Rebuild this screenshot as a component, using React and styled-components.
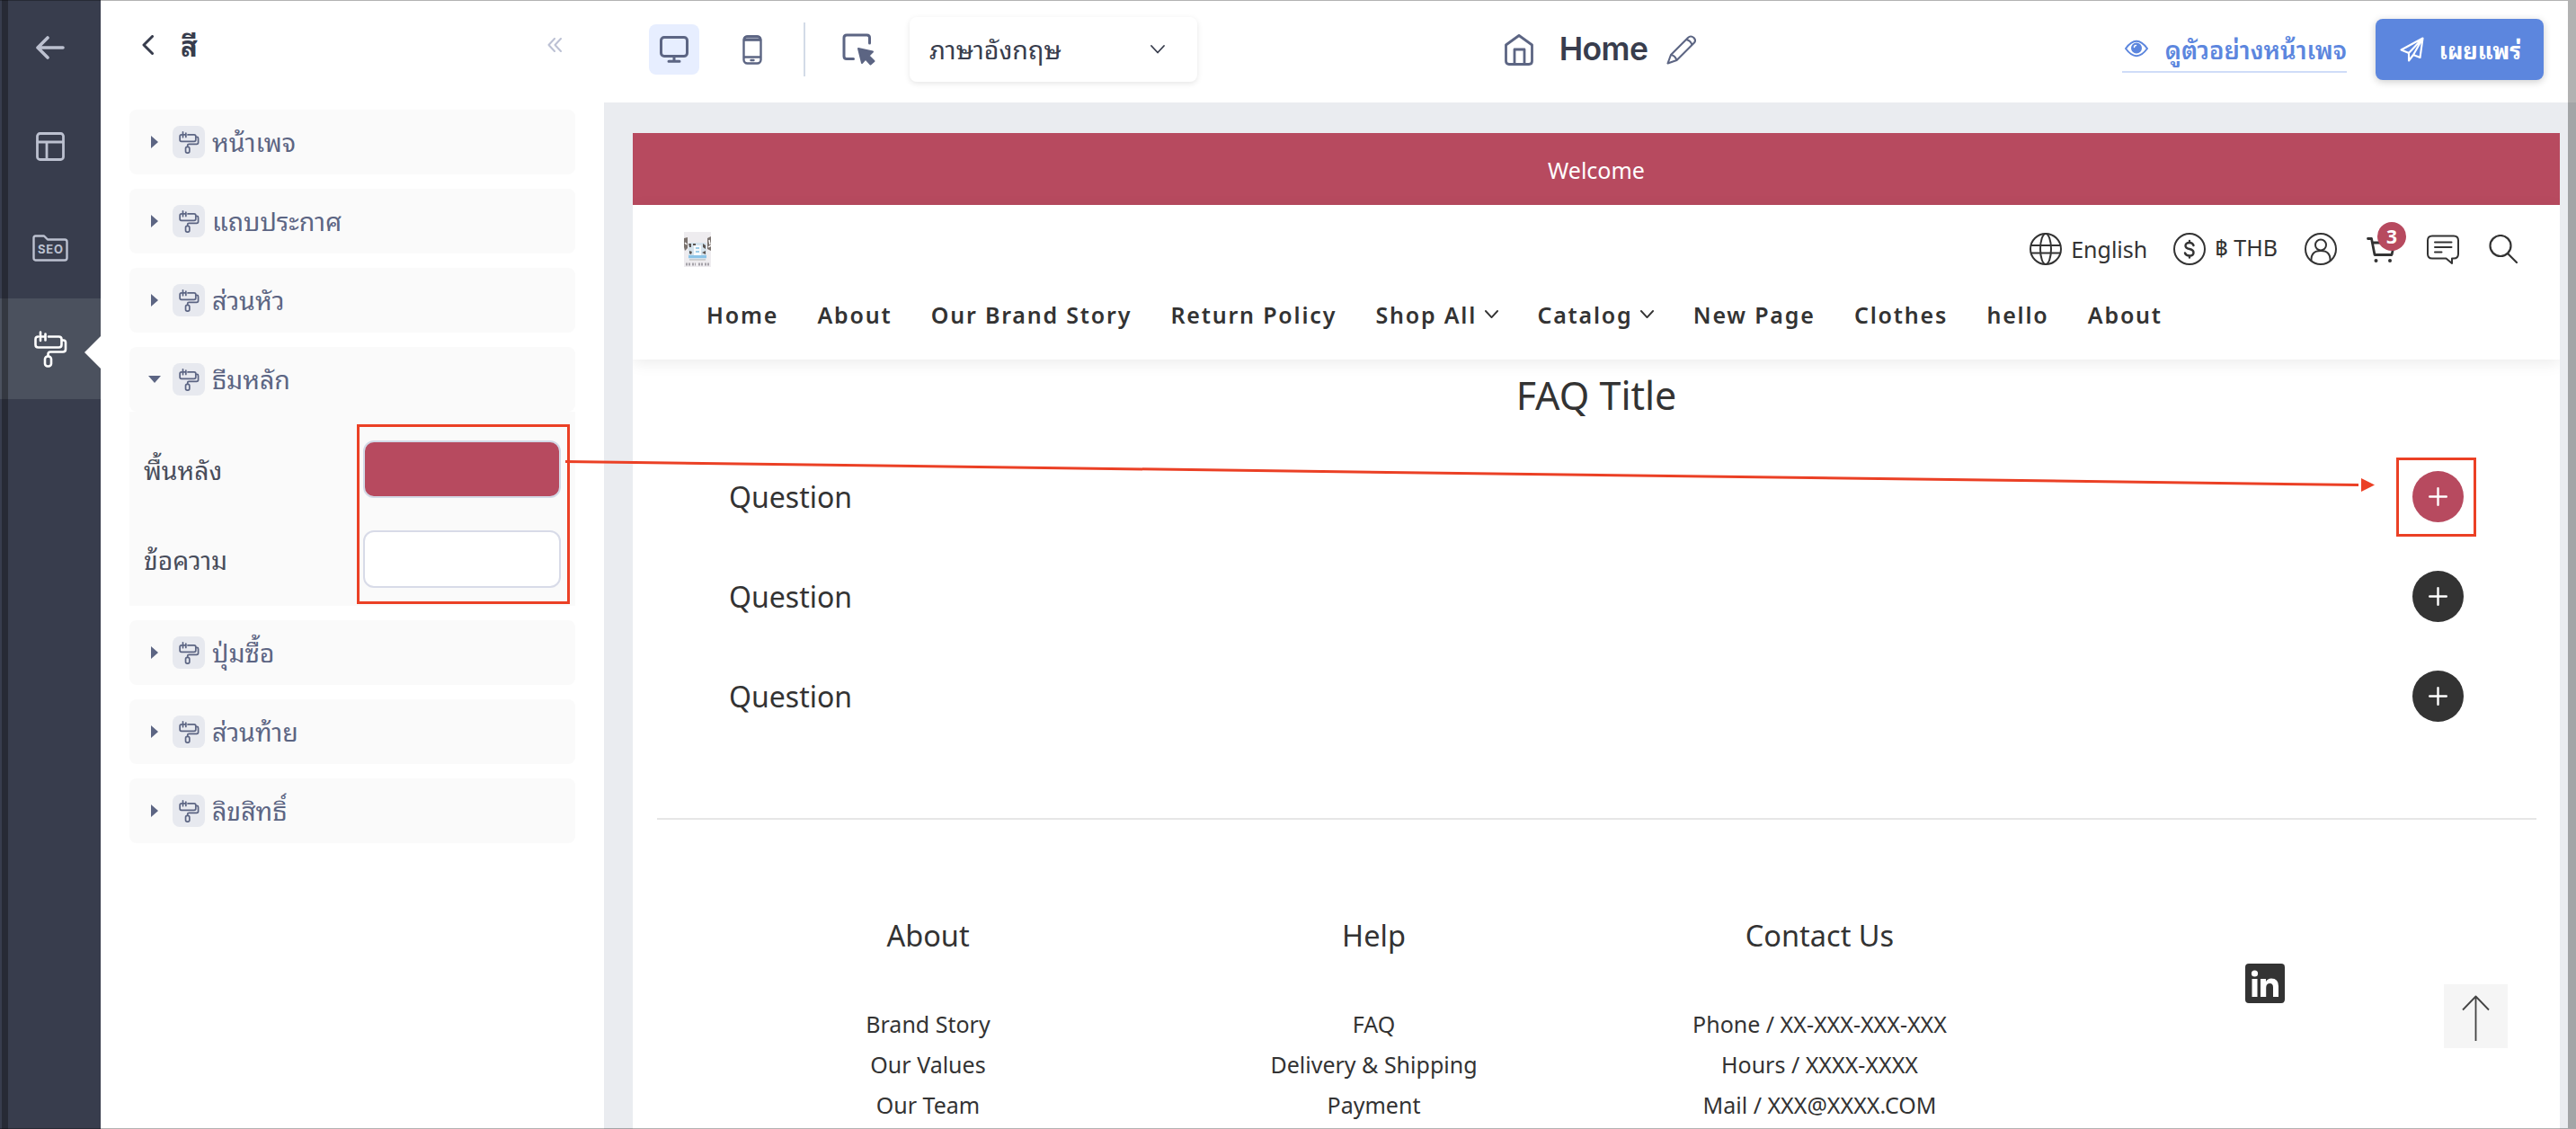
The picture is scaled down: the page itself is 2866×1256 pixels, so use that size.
import React from 'react';
import styled, { createGlobalStyle, css } from 'styled-components';

const latin = '"Noto Sans", "Noto Sans Thai", sans-serif';
const thai = '"Noto Sans Thai Looped", Loma, Garuda, "Noto Sans Thai", "Noto Sans", sans-serif';
const accent = '#b74a5f';
const slate = '#5c6583';
const red = '#eb4025';

const GlobalStyle = createGlobalStyle`
  *, *::before, *::after { box-sizing: border-box; }
  body { margin: 0; background: #fff; overflow: hidden; }
  h1, h2, h3, p, ul { margin: 0; padding: 0; font-weight: 400; }
  svg { display: block; flex: none; }
`;

const Window = styled.div`
  position: relative;
  display: flex;
  width: 2866px;
  height: 1256px;
  overflow: hidden;
  background: #fff;
  font-family: ${latin};
  color: #333;
`;

/* ---------- sidebar ---------- */
const Sidebar = styled.nav`
  position: relative;
  flex: none;
  width: 112px;
  background: #383d4d;
  &::before {
    content: '';
    position: absolute;
    z-index: 1;
    left: 2px;
    top: 0;
    bottom: 0;
    width: 7px;
    background: rgba(0, 0, 0, 0.3);
  }
`;
const SideItem = styled.div`
  position: relative;
  display: flex;
  align-items: center;
  justify-content: center;
  height: ${(p) => p.$h || 112}px;
  color: ${(p) => (p.$active ? '#fff' : '#bcc1d0')};
  background: ${(p) => (p.$active ? '#4b515e' : 'transparent')};
  ${(p) =>
    p.$active &&
    css`
      &::after {
        content: '';
        position: absolute;
        right: 0;
        top: 42px;
        border: solid transparent;
        border-width: 18px 18px 18px 0;
        border-right-color: #fff;
      }
    `}
`;

/* ---------- colour panel ---------- */
const Panel = styled.aside`
  flex: none;
  width: 560px;
  padding: 0 32px;
`;
const PanelHead = styled.header`
  display: flex;
  align-items: center;
  height: 100px;
  margin-bottom: 22px;
  padding: 0 15px 0 14px;
  color: #383d4d;
`;
const PanelTitle = styled.h2`
  flex: 1;
  margin-left: 30px;
  padding-bottom: 3px;
  font: 700 31px/44px ${thai};
`;
const Card = styled.section`
  margin-bottom: 16px;
`;
const CardHead = styled.div`
  display: flex;
  align-items: center;
  height: 72px;
  padding-left: 20px;
  border-radius: 8px;
  background: #fafafa;
  color: ${slate};
  font: 400 28.5px/40px ${thai};
`;
const CardLabel = styled.span`
  padding-bottom: 4px;
`;
const Caret = styled.i`
  flex: none;
  width: 16px;
  margin-right: 12px;
  &::before {
    content: '';
    display: block;
    width: 0;
    margin: 0 auto;
    border: solid transparent;
    ${(p) =>
      p.$open
        ? css`
            border-width: 8px 7px 0;
            border-top-color: ${slate};
          `
        : css`
            border-width: 7px 0 7px 8px;
            border-left-color: ${slate};
          `}
  }
`;
const Chip = styled.span`
  display: flex;
  align-items: center;
  justify-content: center;
  width: 36px;
  height: 36px;
  margin-right: 8px;
  border-radius: 8px;
  background: #e7e9ef;
`;
const CardBody = styled.div`
  display: flex;
  flex-direction: column;
  gap: 36px;
  height: 216px;
  padding: 32px 16px 0;
  background: #fafafa;
`;
const Field = styled.label`
  display: flex;
  align-items: center;
  justify-content: space-between;
  height: 64px;
  color: #484d5b;
  font: 400 28.3px/40px ${thai};
`;
const Swatch = styled.span`
  width: 220px;
  height: 64px;
  border: 2px solid ${(p) => (p.$color === '#fff' ? '#d8dbe8' : '#d3d9e6')};
  border-radius: 12px;
  background: ${(p) => p.$color};
`;

/* ---------- editor ---------- */
const Editor = styled.main`
  flex: 1;
  display: flex;
  flex-direction: column;
`;
const Toolbar = styled.header`
  display: flex;
  align-items: center;
  justify-content: space-between;
  height: 114px;
  padding: 4px 36px 8px 50px;
  color: ${slate};
`;
const Tools = styled.div`
  display: flex;
  align-items: center;
  width: 900px;
`;
const Tool = styled.span`
  display: flex;
  align-items: center;
  justify-content: center;
  width: 56px;
  height: 56px;
  margin-right: ${(p) => p.$gap || 0}px;
  border-radius: 8px;
  background: ${(p) => (p.$active ? '#e7eeff' : 'transparent')};
`;
const Divider = styled.i`
  width: 2px;
  height: 60px;
  margin-right: 31px;
  background: #d3dbe7;
`;
const LanguageSelect = styled.div`
  display: flex;
  align-items: center;
  justify-content: space-between;
  width: 320px;
  height: 72px;
  padding: 0 36px 0 22px;
  border-radius: 8px;
  box-shadow: 0 2px 6px rgba(0, 0, 0, 0.1);
  color: #383d4d;
  font: 400 28.6px/40px ${thai};
  span { padding-bottom: 5px; }
`;
const PageName = styled.div`
  display: flex;
  align-items: center;
  h1 {
    margin: 0 21px 0 29px;
    color: #383d4d;
    font: 600 35.5px/44px Inter, sans-serif;
    letter-spacing: -0.6px;
  }
`;
const Actions = styled.div`
  display: flex;
  align-items: center;
  justify-content: flex-end;
  width: 891px;
`;
const PreviewLink = styled.a`
  display: flex;
  align-items: center;
  justify-content: space-between;
  width: 250px;
  height: 52px;
  margin: 0 32px 0 0;
  padding-left: 3px;
  border-bottom: 2px solid #cfdcf8;
  color: #5c86de;
  font: 600 27.4px/44px ${thai};
  white-space: nowrap;
`;
const PublishButton = styled.button`
  display: flex;
  align-items: center;
  justify-content: space-between;
  width: 187px;
  height: 68px;
  padding: 0 25px 1px 27px;
  border: 0;
  border-radius: 8px;
  background: #5c86de;
  box-shadow: 0 2px 8px rgba(0, 0, 0, 0.2);
  color: #fff;
  font: 700 25.4px/44px ${thai};
  white-space: nowrap;
`;

/* ---------- store preview ---------- */
const Stage = styled.div`
  flex: 1;
  min-height: 0;
  padding: 34px 18px 0 32px;
  background: #eaecf0;
`;
const Store = styled.div`
  position: relative;
  height: 1108px;
  overflow: hidden;
  background: #fff;
`;
const Announcement = styled.div`
  height: 80px;
  background: ${accent};
  color: #fff;
  text-align: center;
  font-size: 25px;
  line-height: 82px;
`;
const StoreHeader = styled.header`
  height: 172px;
  box-shadow: 0 4px 16px rgba(0, 0, 0, 0.08);
`;
const StoreTop = styled.div`
  display: flex;
  align-items: center;
  justify-content: space-between;
  height: 98px;
  padding: 0 47px 0 57px;
`;
const Utilities = styled.div`
  display: flex;
  align-items: center;
  font-size: 25px;
`;
const Utility = styled.span`
  position: relative;
  display: flex;
  align-items: center;
  gap: 10px;
  margin-left: ${(p) => p.$ml}px;
  white-space: nowrap;
`;
const Badge = styled.b`
  position: absolute;
  left: 12px;
  top: -16px;
  width: 32px;
  height: 32px;
  border-radius: 50%;
  background: ${accent};
  color: #fff;
  text-align: center;
  font: 700 21px/33px ${latin};
`;
const StoreNav = styled.nav`
  display: flex;
  align-items: center;
  gap: 43.3px;
  padding: 4px 0 0 82px;
  font-size: 25px;
  font-weight: 600;
  line-height: 40px;
  letter-spacing: 1.8px;
  white-space: nowrap;
  span { display: flex; align-items: center; gap: 9px; }
`;
const FaqTitle = styled.h2`
  margin-top: 8px;
  text-align: center;
  font-size: 43px;
  line-height: 64px;
`;
const FaqList = styled.div`
  padding: 25px 107px 0 107px;
  height: 438px;
`;
const FaqRow = styled.div`
  display: flex;
  align-items: center;
  justify-content: space-between;
  height: 111px;
  font-size: 32px;
`;
const Plus = styled.span`
  display: flex;
  align-items: center;
  justify-content: center;
  width: 57px;
  height: 57px;
  border-radius: 50%;
  background: ${(p) => (p.$active ? accent : '#333')};
`;
const Footer = styled.footer`
  display: grid;
  grid-template-columns: repeat(4, 496px);
  justify-content: center;
  margin: 0 26px 0 27px;
  padding-top: 104px;
  border-top: 2px solid #e6e6e6;
`;
const Column = styled.div`
  text-align: center;
  h3 { font-size: 32.5px; line-height: 50px; margin-bottom: 51px; }
  p { font-size: 25px; line-height: 45px; }
  svg { margin: 56px auto 0 225px; }
`;
const TopButton = styled.div`
  position: absolute;
  right: 58px;
  bottom: 90px;
  display: flex;
  align-items: center;
  justify-content: center;
  width: 71px;
  height: 71px;
  padding-top: 4px;
  background: #f5f5f5;
`;

/* ---------- overlays ---------- */
const Highlight = styled.div`
  position: absolute;
  left: ${(p) => p.$x}px;
  top: ${(p) => p.$y}px;
  width: ${(p) => p.$w}px;
  height: ${(p) => p.$h}px;
  border: 3px solid ${red};
`;
const Pointer = styled.svg`
  position: absolute;
  left: 620px;
  top: 500px;
`;
const Edge = styled.div`
  position: absolute;
  inset: 0;
  border: solid rgba(0, 0, 0, 0.3);
  border-width: 1px 9px 1px 0;
`;

/* ---------- icons ---------- */
const Line = ({ w, h, box, sw = 2, children, ...rest }) => (
  <svg width={w} height={h} viewBox={box || `0 0 ${w} ${h}`} fill="none" stroke="currentColor" strokeWidth={sw} strokeLinecap="round" strokeLinejoin="round" {...rest}>
    {children}
  </svg>
);
const Roller = ({ w = 37, h = 41, sw = 2.6 }) => (
  <Line w={w} h={h} box="0 0 37 41" sw={sw}>
    <path d="M4.5 6.5 Q1.5 6.5 1.5 9.5 V15.5 Q1.5 18.5 4.5 18.5 H27.5 Q30.5 18.5 30.5 15.5 V9.5 Q30.5 6.5 27.5 6.5 H16 M7 1.5 V11 M12.5 3.5 V10.5 M7 6.5 H12.5" />
    <path d="M31 10.5 H32.5 Q35 10.5 35 13 V20.5 Q35 23.5 32 23.5 H18 Q15.5 23.5 15.5 26 V28" />
    <rect x="12" y="28.5" width="7" height="11" rx="3" />
  </Line>
);
const Down = ({ w, h, sw }) => (
  <Line w={w} h={h} box="0 0 16 10" sw={sw}><path d="M1 1 L8 8.5 L15 1" /></Line>
);

const sections = ['หน้าเพจ', 'แถบประกาศ', 'ส่วนหัว', 'ธีมหลัก', 'ปุ่มซื้อ', 'ส่วนท้าย', 'ลิขสิทธิ์'];
const fields = [['พื้นหลัง', accent], ['ข้อความ', '#fff']];
const links = ['Home', 'About', 'Our Brand Story', 'Return Policy', 'Shop All', 'Catalog', 'New Page', 'Clothes', 'hello', 'About'];
const columns = [
  ['About', 'Brand Story', 'Our Values', 'Our Team'],
  ['Help', 'FAQ', 'Delivery & Shipping', 'Payment'],
  ['Contact Us', 'Phone / XX-XXX-XXX-XXX', 'Hours / XXXX-XXXX', 'Mail / XXX@XXXX.COM'],
];

export default function App() {
  return (
    <Window>
      <GlobalStyle />
      <Sidebar>
        <SideItem $h={106}>
          <Line w={32} h={26} sw={3.6}><path d="M30 13 H3 M13 2 L2 13 L13 24" /></Line>
        </SideItem>
        <SideItem $h={114}>
          <Line w={32} h={32} sw={2.8}>
            <rect x="1.5" y="1.5" width="29" height="29" rx="3" />
            <path d="M2 11 H30 M12 11 V30" />
          </Line>
        </SideItem>
        <SideItem>
          <Line w={40} h={30} sw={2.4}>
            <path d="M3.5 1.5 H13 L17 5.5 H36 Q38.5 5.5 38.5 8 V26 Q38.5 28.5 36 28.5 H3.5 Q1.5 28.5 1.5 26 V3.5 Q1.5 1.5 3.5 1.5 Z" />
            <text x="20.3" y="21" textAnchor="middle" fontFamily="Inter, sans-serif" fontWeight="700" fontSize="13" letterSpacing="0.8" fill="currentColor" stroke="none">SEO</text>
          </Line>
        </SideItem>
        <SideItem $active><Roller /></SideItem>
      </Sidebar>

      <Panel>
        <PanelHead>
          <Line w={13} h={22} sw={3}><path d="M11.5 1.5 L2 11 L11.5 20.5" /></Line>
          <PanelTitle>สี</PanelTitle>
          <Line w={16} h={16} sw={2} color="#bcc1d4"><path d="M8 1 L1.5 8 L8 15 M15 1 L8.5 8 L15 15" /></Line>
        </PanelHead>
        {sections.map((name, i) => (
          <Card key={name}>
            <CardHead>
              <Caret $open={i === 3} />
              <Chip><Roller w={23} h={25} sw={2.8} /></Chip>
              <CardLabel>{name}</CardLabel>
            </CardHead>
            {i === 3 && (
              <CardBody>
                {fields.map(([label, color]) => (
                  <Field key={label}>{label}<Swatch $color={color} /></Field>
                ))}
              </CardBody>
            )}
          </Card>
        ))}
      </Panel>

      <Editor>
        <Toolbar>
          <Tools>
            <Tool $active $gap={31}>
              <Line w={32} h={30} sw={3}>
                <rect x="1.5" y="1.5" width="29" height="21" rx="3.5" />
                <path d="M16 23 V28 M10 28.2 H22" />
              </Line>
            </Tool>
            <Tool $gap={29}>
              <Line w={22} h={33} sw={2.4}>
                <path d="M2 5 Q2 1.500 6 1.500 H16 Q20 1.500 20 5 Z" fill="#b5bac8" />
                <rect x="1.5" y="1.5" width="19" height="30" rx="4" />
                <path d="M2 5.5 H20 M2 24.5 H20 M9.5 28 H12.5" />
              </Line>
            </Tool>
            <Divider />
            <Tool $gap={29}>
              <Line w={37} h={36} sw={3}>
                <path d="M30.5 11 V5 Q30.5 2 27.500 2 H5 Q2 2 2 5 V25.500 Q2 28.500 5 28.500 H12.500" />
                <path d="M18 17 L34 20.5 L29.5 25 L35.500 31 L31.500 34.500 L26 28.500 L22 33 Z" fill="currentColor" strokeWidth="2" />
              </Line>
            </Tool>
            <LanguageSelect>
              <span>ภาษาอังกฤษ</span>
              <Down w={16} h={10} sw={1.8} />
            </LanguageSelect>
          </Tools>
          <PageName>
            <Line w={32} h={35} sw={2.8}>
              <path d="M1.5 12 L16 1.5 L30.5 12 V30 Q30.5 33.5 27 33.5 H5 Q1.5 33.5 1.5 30 Z M11 33 V17 H22 V33" />
            </Line>
            <h1>Home</h1>
            <Line w={33} h={33} sw={2.1}>
              <path d="M1.5 31.5 L5 22 L24 3 Q27 0 30.5 3 Q33.5 6 30.5 9 L11.5 28 Z M5 22 Q9.5 22.5 11.5 28 M22 5 Q27 6 28.5 11" />
            </Line>
          </PageName>
          <Actions>
            <PreviewLink>
              <Line w={26} h={20} sw={2}>
                <path d="M1 10 Q13 -6.500 25 10 Q13 26.500 1 10 Z" />
                <circle cx="13" cy="9.5" r="5" fill="currentColor" />
                <path d="M10.5 8.5 Q10.5 6.5 12.5 6.5" stroke="#fff" strokeWidth="1.5" />
              </Line>
              ดูตัวอย่างหน้าเพจ
            </PreviewLink>
            <PublishButton>
              <Line w={27} h={28} sw={2.1}>
                <path d="M25.5 1.5 L22.5 23 L15 20 L10 26.5 V18 L1.5 14.5 Z M10 18 L25.5 1.5 L15 20" />
              </Line>
              เผยแพร่
            </PublishButton>
          </Actions>
        </Toolbar>

        <Stage>
          <Store>
            <Announcement>Welcome</Announcement>
            <StoreHeader>
              <StoreTop>
                <svg width="30" height="39" viewBox="0 0 30 39">
                  <rect width="30" height="39" fill="#eeecef" />
                  <path d="M0 7 L4 6 V18 L1 21 L0 17 Z M26 7 L30 5 V21 L26 19 Z" fill="#7a726e" />
                  <path d="M1 12 L3 14 M28 9 L29 14 M27 17 L30 15" stroke="#fff" strokeWidth="1.5" />
                  <rect x="5" y="12" width="20" height="19" rx="2" fill="#d5e3ed" />
                  <path d="M5 13 h3 v4 h-2 z M21 13 l3 2 v4 l-3 -2 z M6 21 l3 1 -1 3 -2 -1 z M20 23 l4 -2 v4 z M10 13 h3 v2 h-3 z" fill="#5b5552" />
                  <rect x="11" y="15" width="8" height="11" fill="#f7fbfd" />
                  <path d="M13 18 h4 M13 22 h4" stroke="#83bfdf" strokeWidth="1.5" />
                  <rect x="5" y="26" width="20" height="3" fill="#8cc4e8" />
                  <path d="M6 31 h18" stroke="#b9b7b4" strokeWidth="1" />
                  <path d="M2 36 h5 M9 36 h4 M16 36 h5 M23 36 h5" stroke="#a5a2a9" strokeWidth="3" strokeDasharray="2 1" />
                </svg>
                <Utilities>
                  <Utility>
                    <Line w={36} h={36} sw={2}>
                      <circle cx="18" cy="18" r="17" />
                      <ellipse cx="18" cy="18" rx="6" ry="17" />
                      <path d="M2.5 14 H33.5 M2.5 22.5 H33.5" />
                    </Line>
                    English
                  </Utility>
                  <Utility $ml={29}>
                    <Line w={36} h={36} sw={2}>
                      <circle cx="18" cy="18" r="17" />
                      <path strokeWidth="2.4" d="M22.5 14 Q21.5 11 18 11 Q13.5 11 13.5 14.5 Q13.5 17 18 18 Q22.5 19 22.5 22 Q22.5 25.5 18 25.5 Q14 25.5 13 22.5 M18 9 V11 M18 25.5 V27.5" />
                    </Line>
                    ฿ THB
                  </Utility>
                  <Utility $ml={30}>
                    <Line w={36} h={36} sw={2}>
                      <circle cx="18" cy="18" r="17" />
                      <circle cx="18" cy="13.5" r="6" />
                      <path d="M7.5 31 Q7 20 18 20 Q29 20 28.5 31" />
                    </Line>
                  </Utility>
                  <Utility $ml={33}>
                    <Line w={32} h={29} sw={2.8}>
                      <path d="M1.5 2.5 H5.5 L9 20.5 H28 L31 7 H6.500" />
                      <circle cx="10.5" cy="27" r="2" fill="currentColor" stroke="none" />
                      <circle cx="26" cy="27" r="2" fill="currentColor" stroke="none" />
                    </Line>
                    <Badge>3</Badge>
                  </Utility>
                  <Utility $ml={35}>
                    <Line w={36} h={33} sw={2}>
                      <path d="M6 1.5 H30 Q35 1.5 35 6.500 V21.500 Q35 26.500 30 26.500 H28 V32 L21.500 26.500 H6 Q1 26.500 1 21.500 V6.500 Q1 1.5 6 1.5 Z M9 8.5 H27.5 M9 14 H27.5 M9 19.5 H16.500" />
                    </Line>
                  </Utility>
                  <Utility $ml={33}>
                    <Line w={32} h={32} sw={2.2}>
                      <circle cx="13" cy="12.5" r="11.5" />
                      <path d="M21 21 L31 31" />
                    </Line>
                  </Utility>
                </Utilities>
              </StoreTop>
              <StoreNav>
                {links.map((l, i) => (
                  <span key={i}>{l}{(i === 4 || i === 5) && <Down w={15} h={9.5} sw={2} />}</span>
                ))}
              </StoreNav>
            </StoreHeader>
            <FaqTitle>FAQ Title</FaqTitle>
            <FaqList>
              {[0, 1, 2].map((i) => (
                <FaqRow key={i}>
                  Question
                  <Plus $active={i === 0}>
                    <Line w={21} h={21} sw={2.4} color="#fff"><path d="M10.5 1.2 V19.8 M1.2 10.5 H19.8" /></Line>
                  </Plus>
                </FaqRow>
              ))}
            </FaqList>
            <Footer>
              {columns.map(([head, ...items]) => (
                <Column key={head}>
                  <h3>{head}</h3>
                  {items.map((t) => <p key={t}>{t}</p>)}
                </Column>
              ))}
              <Column>
                <svg width="44" height="44" viewBox="0 0 44 44">
                  <rect width="44" height="44" rx="4" fill="#333" />
                  <g fill="#fff">
                    <circle cx="10.5" cy="11" r="3.6" />
                    <rect x="7.5" y="17" width="6" height="20" />
                    <path d="M17 17 H23 V20 Q25 16.5 29 16.5 Q37 16.5 37 25 V37 H31 V26.5 Q31 22 27.5 22 Q23.2 22 23.2 27 V37 H17 Z" />
                  </g>
                </svg>
              </Column>
            </Footer>
            <TopButton>
              <Line w={31} h={52} sw={1.8} color="#444"><path d="M15.5 1.5 V51 M1 16.5 L15.5 1.5 L30 16.5" strokeLinecap="butt" /></Line>
            </TopButton>
          </Store>
        </Stage>
      </Editor>

      <Highlight $x={397} $y={472} $w={237} $h={200} />
      <Highlight $x={2666} $y={509} $w={89} $h={88} />
      <Pointer width="2040" height="60" viewBox="0 0 2040 60">
        <path d="M9 13.5 L2004 39.5" stroke={red} strokeWidth="3" />
        <path d="M2007 32 L2022 39.5 L2007 47 Z" fill={red} />
      </Pointer>
      <Edge />
    </Window>
  );
}
